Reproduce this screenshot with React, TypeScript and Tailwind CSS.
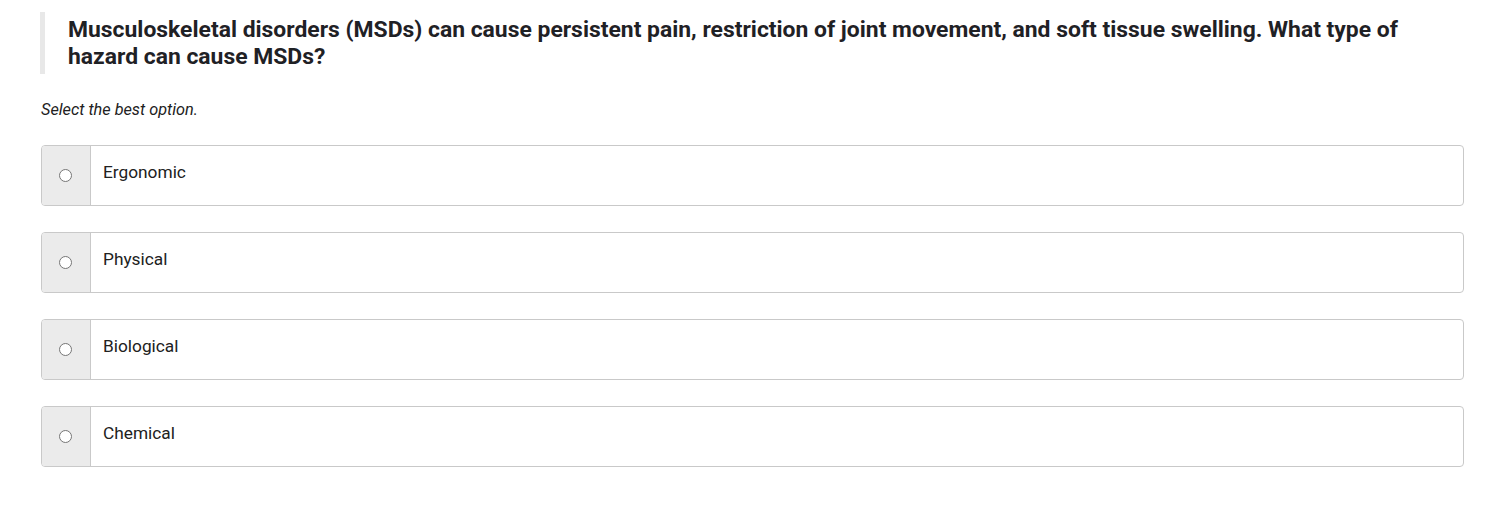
import { FunctionComponent } from "react";

const options = ["Ergonomic", "Physical", "Biological", "Chemical"];

const OptionRow: FunctionComponent<{ label: string }> = ({ label }) => {
  return (
    <label className="flex flex-row h-[61px] border border-[#c9c9c9] rounded-[4px] overflow-hidden bg-white">
      <div className="w-[49px] shrink-0 bg-[#ebebeb] border-r border-[#c9c9c9] flex items-center justify-center pr-[2px]">
        <span className="w-[13px] h-[13px] rounded-full border border-[#767676] bg-white" />
      </div>
      <div className="flex-1 pl-[12px] pt-[15px] text-[17.3px] leading-[22px] text-[#212121]">
        {label}
      </div>
    </label>
  );
};

const App: FunctionComponent = () => {
  return (
    <div className="w-[1507px] h-[530px] bg-white font-['Roboto',sans-serif] text-[#212529]">
      <div className="pt-[12px] pl-[40px] pr-[43px]">
        <div className="border-l-[5px] border-[#e8e8e8] pl-[23px] pt-[4px] pb-[4px]">
          <h1 className="text-[22.9px] leading-[27px] font-bold text-[#1f2125]">
            Musculoskeletal disorders (MSDs) can cause persistent pain, restriction of joint movement, and soft tissue swelling. What type of hazard can cause MSDs?
          </h1>
        </div>
        <p className="mt-[25px] ml-[1px] text-[16.3px] leading-[22px] italic text-[#212121]">
          Select the best option.
        </p>
        <div className="mt-[24px] ml-[1px] flex flex-col gap-[26px]">
          {options.map((o) => (
            <OptionRow key={o} label={o} />
          ))}
        </div>
      </div>
    </div>
  );
};

export default App;
